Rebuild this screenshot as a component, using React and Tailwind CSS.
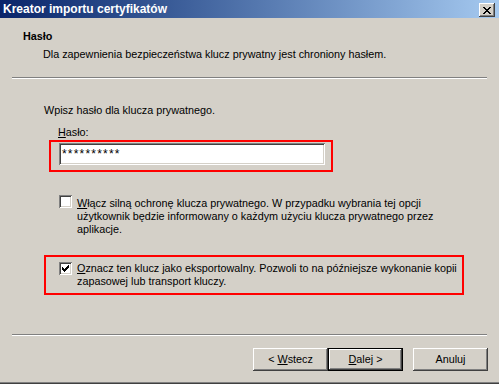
import React from 'react';

const raised =
  'shadow-[inset_-1px_-1px_#404040,inset_1px_1px_#ffffff,inset_-2px_-2px_#808080,inset_2px_2px_#d4d0c8]';
const sunken =
  'shadow-[inset_1px_1px_#808080,inset_-1px_-1px_#ffffff,inset_2px_2px_#404040,inset_-2px_-2px_#d4d0c8]';

// pixel rows for tiny classic glyphs
const CHECK = [
  [6, 1], [5, 2], [0, 1, 4, 3], [0, 2, 3, 3], [0, 5], [1, 3], [2, 1],
];
const CROSS = [
  [0, 2, 6, 2], [1, 2, 5, 2], [2, 4], [3, 2], [2, 4], [1, 2, 5, 2], [0, 2, 6, 2],
];

function Pixels({ rows, w, h }) {
  const rects = [];
  rows.forEach((r, y) => {
    for (let i = 0; i < r.length; i += 2) {
      rects.push(<rect key={`${y}-${i}`} x={r[i]} y={y} width={r[i + 1]} height={1} fill="#000" />);
    }
  });
  return (
    <svg width={w} height={h} viewBox={`0 0 ${w} ${h}`} shapeRendering="crispEdges">
      {rects}
    </svg>
  );
}

function Checkbox({ checked }) {
  return (
    <div className={`w-[13px] h-[13px] shrink-0 bg-white flex items-center justify-center ${sunken}`}>
      {checked && <Pixels rows={CHECK} w={7} h={7} />}
    </div>
  );
}

function Button({ children, isDefault }) {
  if (isDefault) {
    return (
      <div className="w-[75px] h-[23px] border border-black">
        <div className={`w-full h-full flex items-center justify-center ${raised}`}>{children}</div>
      </div>
    );
  }
  return (
    <div className={`w-[75px] h-[23px] flex items-center justify-center ${raised}`}>{children}</div>
  );
}

function Separator() {
  return <div className="mx-[12px] h-[2px] border-t border-t-[#808080] border-b border-b-white" />;
}

export default function App() {
  return (
    <div
      className="w-[499px] h-[384px] flex flex-col bg-[#d4d0c8] text-black text-[10.8px] leading-[13px] whitespace-nowrap shadow-[inset_0_-1px_#404040,inset_0_-2px_#808080] overflow-hidden"
      style={{ fontFamily: '"Liberation Sans", Arial, sans-serif' }}
    >
      {/* Title bar */}
      <div className="h-[18px] flex items-start justify-between bg-gradient-to-r from-[#0a246a] to-[#a6caf0]">
        <span className="pl-[3px] pt-[3px] text-white font-bold text-[12px] leading-[13px]">
          Kreator importu certyfikatów
        </span>
        <div className={`mt-[3px] mr-[4px] w-[16px] h-[14px] bg-[#d4d0c8] flex items-center justify-center ${raised}`}>
          <Pixels rows={CROSS} w={8} h={7} />
        </div>
      </div>

      {/* Header */}
      <div className="pt-[12px] pl-[23px] font-bold">Hasło</div>
      <div className="mt-[5px] pl-[43px]">Dla zapewnienia bezpieczeństwa klucz prywatny jest chroniony hasłem.</div>
      <div className="mt-[16px]">
        <Separator />
      </div>

      {/* Body */}
      <div className="mt-[25px] pl-[44px]">Wpisz hasło dla klucza prywatnego.</div>
      <div className="mt-[9px] pl-[58px]">
        <span className="underline">H</span>asło:
      </div>
      <div className="mt-[1px] ml-[49px] w-[284px] h-[32px] border-2 border-[#ff0000] pl-[8px] pt-[1px]">
        <div className={`w-[266px] h-[22px] bg-white pl-[3px] pt-[5px] text-[12px] tracking-[1.2px] ${sunken}`}>
          **********
        </div>
      </div>

      <div className="mt-[23px] pl-[59px] flex items-start gap-[5px]">
        <Checkbox />
        <div className="pt-[2px]">
          <span className="underline">W</span>łącz silną ochronę klucza prywatnego. W przypadku wybrania tej opcji
          <br />
          użytkownik będzie informowany o każdym użyciu klucza prywatnego przez
          <br />
          aplikacje.
        </div>
      </div>

      <div className="mt-[19px] ml-[44px] w-[420px] h-[40px] border-2 border-[#ff0000] pl-[13px] pt-[5px] flex items-start gap-[5px]">
        <Checkbox checked />
        <div>
          <span className="underline">O</span>znacz ten klucz jako eksportowalny. Pozwoli to na późniejsze wykonanie kopii
          <br />
          zapasowej lub transport kluczy.
        </div>
      </div>

      <div className="mt-[39px]">
        <Separator />
      </div>

      {/* Buttons */}
      <div className="mt-[12px] pr-[11px] flex justify-end">
        <Button>
          &lt; <span className="underline ml-[3px]">W</span>stecz
        </Button>
        <Button isDefault>
          <span className="underline">D</span>alej &gt;
        </Button>
        <div className="ml-[10px]">
          <Button>Anuluj</Button>
        </div>
      </div>
    </div>
  );
}
